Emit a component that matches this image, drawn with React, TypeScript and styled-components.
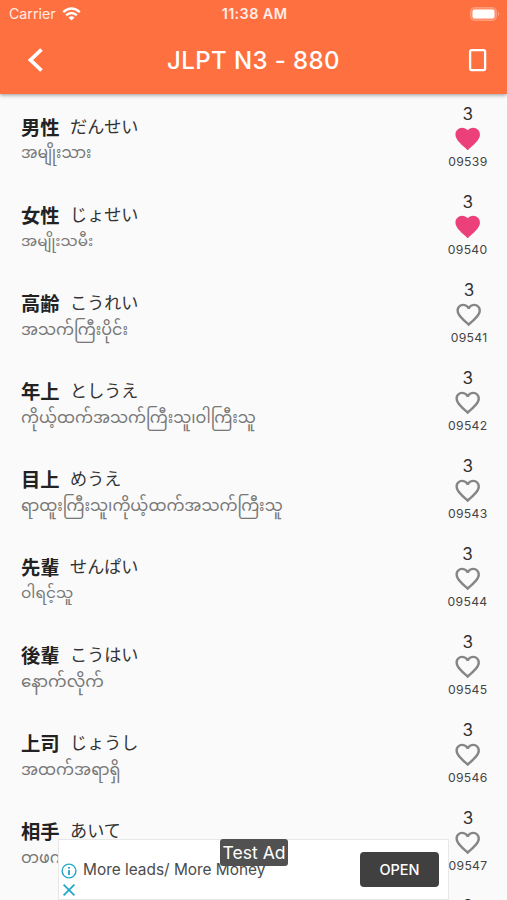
import React from 'react';
import styled, { createGlobalStyle } from 'styled-components';

const Global = createGlobalStyle`
  * { box-sizing: border-box; }
  body { margin: 0; background: #fafafa; }
`;

const Screen = styled.div`
  position: relative;
  width: 507px;
  height: 900px;
  overflow: hidden;
  display: flex;
  flex-direction: column;
  background: #fafafa;
  font-family: Inter, "Noto Sans CJK JP", "Noto Sans Myanmar", sans-serif;
`;

const Header = styled.header`
  flex: none;
  height: 94px;
  background: #ff7040;
  color: #fff;
  box-shadow: 0 1px 4px rgba(0, 0, 0, 0.42);
  z-index: 1;
`;

const StatusBar = styled.div`
  height: 27px;
  padding: 0 7px 0 9px;
  display: grid;
  grid-template-columns: 1fr auto 1fr;
  align-items: center;
  color: #ffece5;
`;

const Carrier = styled.div`
  display: flex;
  align-items: center;
  gap: 6px;
  font-size: 14.2px;
  letter-spacing: 0;
`;

const Clock = styled.div`
  font-size: 14.4px;
  font-weight: 600;
  letter-spacing: 0.4px;
`;

const Battery = styled.svg`
  justify-self: end;
`;

const Toolbar = styled.div`
  height: 67px;
  padding: 0 18px 0 26px;
  display: grid;
  grid-template-columns: 1fr auto 1fr;
  align-items: center;
`;

const Title = styled.h1`
  margin: 0 8px 0 0;
  font-size: 24px;
  font-weight: 500;
  letter-spacing: 0.4px;
  white-space: nowrap;
`;

const DeviceIcon = styled.svg`
  justify-self: end;
`;

const BackIcon = styled.svg`
  margin-top: -2px;
`;

const List = styled.main`
  flex: 1;
  min-height: 0;
  overflow: hidden;
`;

const Row = styled.article`
  height: 88px;
  padding: 9px 19.5px 0 21px;
  display: flex;
  justify-content: space-between;
`;

const Entry = styled.div`
  padding-top: 10px;
`;

const Word = styled.div`
  display: flex;
  align-items: center;
  gap: 10.5px;
  height: 28px;
`;

const Kanji = styled.span`
  margin-top: -1px;
  font-size: 19.3px;
  font-weight: 700;
  color: #222;
`;

const Kana = styled.span`
  margin-top: -4px;
  font-size: 17.1px;
  color: #333;
`;

const Meaning = styled.div<{ $size?: number }>`
  height: 24px;
  line-height: 24px;
  font-size: ${({ $size }) => $size ?? 16}px;
  color: #777;
  white-space: nowrap;
`;

const Side = styled.div`
  display: flex;
  flex-direction: column;
  align-items: center;
`;

const Level = styled.span`
  height: 21px;
  line-height: 22px;
  font-size: 17px;
  color: #333;
`;

const Code = styled.span`
  height: 16px;
  margin-top: 1px;
  line-height: 16px;
  font-size: 12.2px;
  letter-spacing: 0.3px;
  color: #444;
`;

const Ad = styled.aside`
  position: absolute;
  left: 58px;
  top: 839px;
  width: 391px;
  height: 61px;
  padding: 0 9px 0 2px;
  display: flex;
  align-items: center;
  background: #fff;
  border: 1px solid #e8e8e8;
  z-index: 2;
`;

const AdControls = styled.div`
  display: flex;
  flex-direction: column;
  gap: 3px;
  padding-top: 21px;
  width: 22px;
`;

const AdText = styled.span`
  flex: 1;
  font-size: 15.4px;
  color: #4b4b4b;
`;

const Open = styled.button`
  width: 79px;
  height: 35px;
  padding: 0;
  border: 0;
  border-radius: 4px;
  background: #404040;
  color: #fff;
  font: 500 14.5px Inter, sans-serif;
  letter-spacing: 0;
`;

const TestBadge = styled.span`
  position: absolute;
  left: 161px;
  top: -1px;
  width: 68px;
  height: 27px;
  line-height: 27px;
  border-radius: 3px;
  text-align: center;
  font-size: 17.6px;
  background: #515151;
  color: #fff;
  white-space: nowrap;
`;

const HEART =
  'M12 21.35l-1.45-1.32C5.4 15.36 2 12.28 2 8.5 2 5.42 4.42 3 7.5 3c1.74 0 3.41.81 4.5 2.09C13.09 3.81 14.76 3 16.5 3 19.58 3 22 5.42 22 8.5c0 3.78-3.4 6.86-8.55 11.54L12 21.35z';
const HEART_BORDER =
  'M16.5 3c-1.74 0-3.41.81-4.5 2.09C10.91 3.81 9.24 3 7.5 3 4.42 3 2 5.42 2 8.5c0 3.78 3.4 6.86 8.55 11.54L12 21.35l1.45-1.32C18.6 15.36 22 12.28 22 8.5 22 5.42 19.58 3 16.5 3zm-4.4 15.55l-.1.1-.1-.1C7.14 14.24 4 11.39 4 8.5 4 6.5 5.5 5 7.5 5c1.54 0 3.04.99 3.57 2.36h1.87C13.46 5.99 14.96 5 16.5 5c2 0 3.5 1.5 3.5 3.5 0 2.89-3.14 5.74-7.9 10.05z';

const Heart = ({ liked }: { liked: boolean }) => (
  <svg width="29.4" height="29.4" viewBox="0 0 24 24" fill={liked ? '#ec407a' : '#858585'}>
    <path d={liked ? HEART : HEART_BORDER} />
  </svg>
);

type Item = {
  kanji: string;
  kana: string;
  meaning: string;
  code: string;
  liked?: boolean;
  size?: number;
};

const items: Item[] = [
  { kanji: '男性', kana: 'だんせい', meaning: 'အမျိုးသား', code: '09539', liked: true, size: 15.5 },
  { kanji: '女性', kana: 'じょせい', meaning: 'အမျိုးသမီး', code: '09540', liked: true, size: 15.2 },
  { kanji: '高齢', kana: 'こうれい', meaning: 'အသက်ကြီးပိုင်း', code: '09541' },
  { kanji: '年上', kana: 'としうえ', meaning: 'ကိုယ့်ထက်အသက်ကြီးသူ၊ဝါကြီးသူ', code: '09542' },
  { kanji: '目上', kana: 'めうえ', meaning: 'ရာထူးကြီးသူ၊ကိုယ့်ထက်အသက်ကြီးသူ', code: '09543' },
  { kanji: '先輩', kana: 'せんぱい', meaning: 'ဝါရင့်သူ', code: '09544', size: 15.3 },
  { kanji: '後輩', kana: 'こうはい', meaning: 'နောက်လိုက်', code: '09545', size: 16.5 },
  { kanji: '上司', kana: 'じょうし', meaning: 'အထက်အရာရှိ', code: '09546' },
  { kanji: '相手', kana: 'あいて', meaning: 'တဖက်', code: '09547' },
  { kanji: '', kana: '', meaning: '', code: '09548' },
];

export default function App() {
  return (
    <Screen>
      <Global />
      <Header>
        <StatusBar>
          <Carrier>
            Carrier
            <svg width="19" height="14" viewBox="0 0 19 14" fill="none" stroke="#fff" strokeWidth="2.5">
              <path d="M1.2 5.1Q9.5-2 17.8 5.1M4.2 8.2Q9.5 3.7 14.8 8.2" />
              <path d="M9.5 13.5L6.5 10.5Q9.5 8 12.5 10.5Z" fill="#fff" stroke="none" />
            </svg>
          </Carrier>
          <Clock>11:38 AM</Clock>
          <Battery width="30" height="14" viewBox="0 0 30 14">
            <rect x="0.5" y="0.5" width="26" height="13" rx="4" fill="#ff8f69" stroke="#ff9d7b" />
            <rect x="2.5" y="2.5" width="22" height="9" rx="2.2" fill="#fff" />
            <path d="M28 4.6q2 2.4 0 4.8z" fill="#ffa98c" />
          </Battery>
        </StatusBar>
        <Toolbar>
          <BackIcon width="19" height="26" viewBox="0 0 19 26" fill="none" stroke="#fff" strokeWidth="3.8">
            <path d="M15.5 2.5L4.5 13L15.5 23.5" />
          </BackIcon>
          <Title>JLPT N3 - 880</Title>
          <DeviceIcon width="24" height="24" viewBox="0 0 24 24" fill="none" stroke="#fff" strokeWidth="2.3">
            <rect x="5.1" y="1.2" width="15" height="20" rx="1.6" />
          </DeviceIcon>
        </Toolbar>
      </Header>
      <List>
        {items.map((item) => (
          <Row key={item.code}>
            <Entry>
              <Word>
                <Kanji>{item.kanji}</Kanji>
                <Kana>{item.kana}</Kana>
              </Word>
              <Meaning $size={item.size}>{item.meaning}</Meaning>
            </Entry>
            <Side>
              <Level>3</Level>
              <Heart liked={!!item.liked} />
              <Code>{item.code}</Code>
            </Side>
          </Row>
        ))}
      </List>
      <Ad>
        <AdControls>
          <svg width="16" height="16" viewBox="0 0 16 16" fill="none" stroke="#20a8c8" strokeWidth="1.4">
            <circle cx="8" cy="8" r="6.9" />
            <path d="M8 7v5M8 4v1.7" strokeWidth="1.8" />
          </svg>
          <svg width="16" height="16" viewBox="0 0 16 16" fill="none" stroke="#20a8c8" strokeWidth="1.7">
            <path d="M2.6 2.6L13.4 13.4M13.4 2.6L2.6 13.4" />
          </svg>
        </AdControls>
        <AdText>More leads/ More Money</AdText>
        <Open>OPEN</Open>
        <TestBadge>Test Ad</TestBadge>
      </Ad>
    </Screen>
  );
}
